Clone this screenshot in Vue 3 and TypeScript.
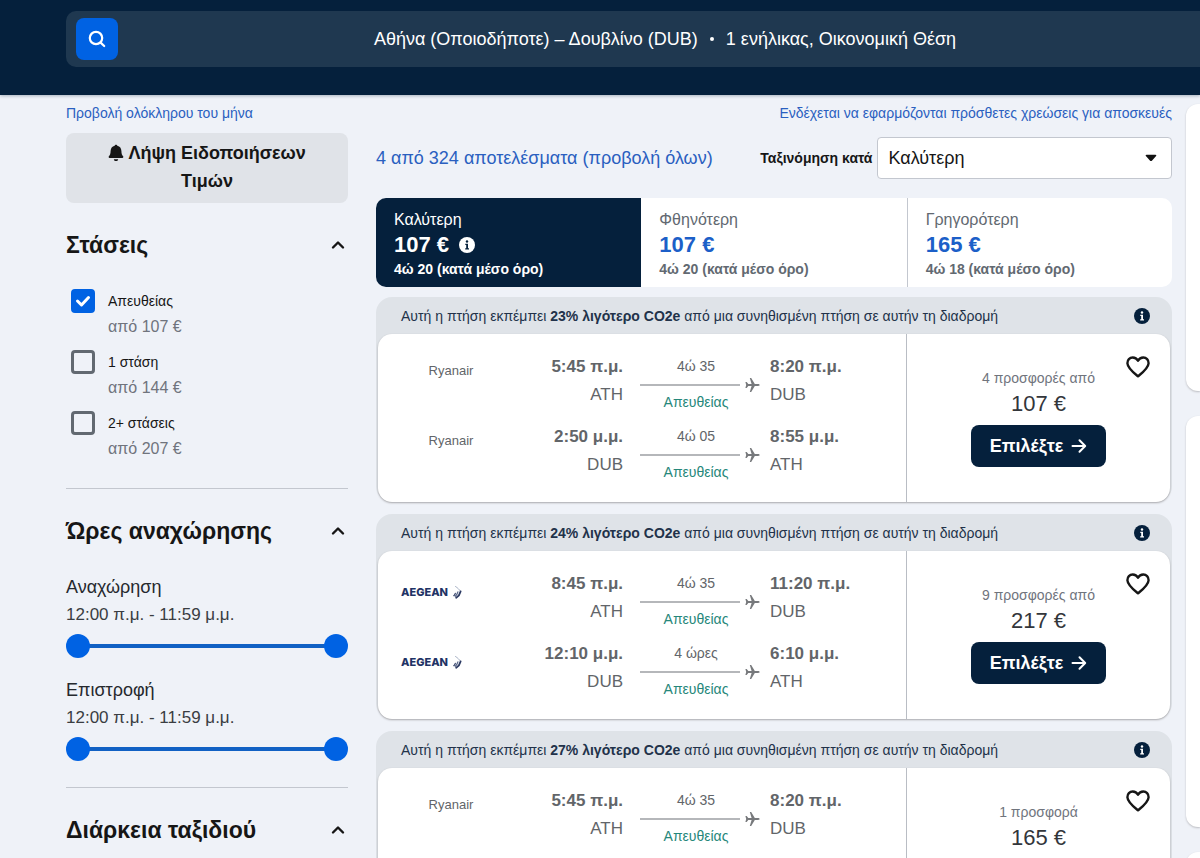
<script setup lang="ts">
import { reactive, ref } from 'vue'

interface Leg {
  airline: 'Ryanair' | 'Aegean'
  depart: string
  from: string
  duration: string
  arrive: string
  to: string
}
interface Flight {
  saving: string
  offers: string
  price: string
  legs: Leg[]
}

const stops = reactive([
  { id: 'direct', label: 'Απευθείας', price: 'από 107 €', checked: true },
  { id: 'one', label: '1 στάση', price: 'από 144 €', checked: false },
  { id: 'two', label: '2+ στάσεις', price: 'από 207 €', checked: false },
])

const times = reactive([
  { label: 'Αναχώρηση', low: 0, high: 1439 },
  { label: 'Επιστροφή', low: 0, high: 1439 },
])

function clock(minutes: number): string {
  const hours = Math.floor(minutes / 60)
  const rest = String(minutes % 60).padStart(2, '0')
  return `${hours % 12 || 12}:${rest} ${hours < 12 ? 'π.μ.' : 'μ.μ.'}`
}

const sort = ref('Καλύτερη')
const tabs = [
  { name: 'Καλύτερη', price: '107 €', time: '4ώ 20 (κατά μέσο όρο)' },
  { name: 'Φθηνότερη', price: '107 €', time: '4ώ 20 (κατά μέσο όρο)' },
  { name: 'Γρηγορότερη', price: '165 €', time: '4ώ 18 (κατά μέσο όρο)' },
]

const flights: Flight[] = [
  {
    saving: '23%',
    offers: '4 προσφορές από',
    price: '107 €',
    legs: [
      { airline: 'Ryanair', depart: '5:45 π.μ.', from: 'ATH', duration: '4ώ 35', arrive: '8:20 π.μ.', to: 'DUB' },
      { airline: 'Ryanair', depart: '2:50 μ.μ.', from: 'DUB', duration: '4ώ 05', arrive: '8:55 μ.μ.', to: 'ATH' },
    ],
  },
  {
    saving: '24%',
    offers: '9 προσφορές από',
    price: '217 €',
    legs: [
      { airline: 'Aegean', depart: '8:45 π.μ.', from: 'ATH', duration: '4ώ 35', arrive: '11:20 π.μ.', to: 'DUB' },
      { airline: 'Aegean', depart: '12:10 μ.μ.', from: 'DUB', duration: '4 ώρες', arrive: '6:10 μ.μ.', to: 'ATH' },
    ],
  },
  {
    saving: '27%',
    offers: '1 προσφορά',
    price: '165 €',
    legs: [
      { airline: 'Ryanair', depart: '5:45 π.μ.', from: 'ATH', duration: '4ώ 35', arrive: '8:20 π.μ.', to: 'DUB' },
    ],
  },
]
</script>

<template>
  <div class="page">
    <header class="top">
      <div class="search">
        <button class="search-btn" type="button" aria-label="Αναζήτηση">
          <svg viewBox="0 0 20 20" width="20" height="20" fill="none" stroke="#fff" stroke-width="2.200" stroke-linecap="round">
            <circle cx="9" cy="9" r="6.2" /><path d="M13.600 13.600l3.600 3.400" />
          </svg>
        </button>
        <p class="summary">
          <span>Αθήνα (Οποιοδήποτε) – Δουβλίνο (DUB)</span>
          <i class="dot"></i>
          <span>1 ενήλικας, Οικονομική Θέση</span>
        </p>
      </div>
    </header>

    <div class="body">
      <aside class="side">
        <a class="small-link" href="#month">Προβολή ολόκληρου του μήνα</a>
        <button class="alerts" type="button">
          <svg class="bell" viewBox="0 0 16 18" width="16" height="18" fill="#161616">
            <path d="M8 .8c.7 0 1.200.4 1.300 1 2.700.6 4 2.600 4.100 5.200.1 2.700.5 4 1.700 5.300.6.700.2 1.700-.7 1.700H1.600c-.9 0-1.300-1-.7-1.700C2.100 11 2.500 9.700 2.600 7c.1-2.600 1.400-4.600 4.100-5.200.1-.6.600-1 1.300-1zM5.800 15.200h4.400c-.2 1.200-1 1.900-2.200 1.900s-2-.7-2.200-1.900z" />
          </svg>
          Λήψη Ειδοποιήσεων Τιμών
        </button>

        <section class="filter">
          <h2><button type="button" class="fold">Στάσεις
            <svg viewBox="0 0 14 10" width="14" height="10"><path d="M2 7.500l5-5 5 5" /></svg></button></h2>
          <div class="stops">
            <label v-for="s in stops" :key="s.id" class="stop">
              <input v-model="s.checked" type="checkbox">
              <span class="stop-name">{{ s.label }}</span>
              <span class="stop-price">{{ s.price }}</span>
            </label>
          </div>
        </section>

        <section class="filter">
          <h2><button type="button" class="fold">Ώρες αναχώρησης
            <svg viewBox="0 0 14 10" width="14" height="10"><path d="M2 7.500l5-5 5 5" /></svg></button></h2>
          <div class="times">
            <div v-for="t in times" :key="t.label">
              <p class="time-text">{{ t.label }}</p>
              <p class="time-text range-text">{{ clock(t.low) }} - {{ clock(t.high) }}</p>
              <div class="slider">
                <span class="track"></span>
                <input v-model.number="t.low" type="range" min="0" max="1439" :aria-label="t.label + ' από'">
                <input v-model.number="t.high" type="range" min="0" max="1439" :aria-label="t.label + ' έως'">
              </div>
            </div>
          </div>
        </section>

        <section class="filter last">
          <h2><button type="button" class="fold">Διάρκεια ταξιδιού
            <svg viewBox="0 0 14 10" width="14" height="10"><path d="M2 7.500l5-5 5 5" /></svg></button></h2>
        </section>
      </aside>

      <main class="results">
        <a class="small-link fees" href="#fees">Ενδέχεται να εφαρμόζονται πρόσθετες χρεώσεις για αποσκευές</a>
        <div class="sort-row">
          <a class="count" href="#all">4 από 324 αποτελέσματα (προβολή όλων)</a>
          <label class="sort-label" for="sort">Ταξινόμηση κατά</label>
          <div class="select">
            <select id="sort" v-model="sort">
              <option v-for="t in tabs" :key="t.name">{{ t.name }}</option>
            </select>
            <svg viewBox="0 0 12 8" width="12" height="8" fill="#111"><path d="M1.500.8h9c.8 0 1.100.8.6 1.300L6.900 6.700c-.5.5-1.300.5-1.800 0L.9 2.100C.4 1.600.7.8 1.500.8z" /></svg>
          </div>
        </div>

        <div class="tabs">
          <button v-for="(t, i) in tabs" :key="t.name" type="button" class="tab" :class="{ active: i === 0 }">
            <span class="tab-name">{{ t.name }}</span>
            <span class="tab-price">{{ t.price }}
              <svg v-if="i === 0" viewBox="0 0 16 16" width="16" height="16">
                <circle cx="8" cy="8" r="8" fill="#fff" /><circle cx="8" cy="4.500" r="1.200" fill="#05203c" /><path d="M6.300 6.800H9v4.400h1v1.300H6.200v-1.300h1V8h-.9z" fill="#05203c" />
              </svg>
            </span>
            <span class="tab-time">{{ t.time }}</span>
          </button>
        </div>

        <article v-for="(f, i) in flights" :key="i" class="card">
          <div class="eco">
            <p>Αυτή η πτήση εκπέμπει <b>{{ f.saving }} λιγότερο CO2e</b> από μια συνηθισμένη πτήση σε αυτήν τη διαδρομή</p>
            <svg viewBox="0 0 16 16" width="16" height="16">
              <circle cx="8" cy="8" r="8" fill="#05203c" /><circle cx="8" cy="4.500" r="1.200" fill="#fff" /><path d="M6.300 6.800H9v4.400h1v1.300H6.200v-1.300h1V8h-.9z" fill="#fff" />
            </svg>
          </div>
          <div class="ticket">
            <div class="legs">
              <div v-for="(l, j) in f.legs" :key="j" class="leg">
                <div v-if="l.airline === 'Ryanair'" class="airline">Ryanair</div>
                <div v-else class="airline logo">
                  <span>AEGEAN</span>
                  <svg viewBox="0 0 10 14" width="10" height="14" fill="none" stroke-linecap="round">
                    <path d="M3.500 1.500c2.200 1.400 4 3 5 5" stroke="#a9b3c6" stroke-width="1" />
                    <path d="M8.600 6.500c-.6 2.500-2 4.800-4.400 6.300" stroke="#2c3a63" stroke-width="1.800" />
                    <path d="M5.900 6.800c-.5 1.800-1.300 3.200-2.600 4.400" stroke="#5d6a8b" stroke-width="1.300" />
                    <path d="M3.300 8.300c-.3 1-.8 1.800-1.500 2.400" stroke="#2c3a63" stroke-width="1.200" />
                  </svg>
                </div>
                <div class="end depart"><b>{{ l.depart }}</b><span>{{ l.from }}</span></div>
                <div class="route">
                  <span class="duration">{{ l.duration }}</span>
                  <div class="line">
                    <i></i>
                    <svg viewBox="0 0 16 16" width="16" height="16">
                      <path d="M15.600 8c0 .6-.7.9-1.500.9h-3.300l-3.600 6H5.800l1.800-6H4.300L2.700 11H1.400l.8-3-.8-3h1.300l1.600 2.100h3.300l-1.800-6h1.400l3.600 6h3.300c.8 0 1.500.3 1.500.9z" />
                    </svg>
                  </div>
                  <span class="direct">Απευθείας</span>
                </div>
                <div class="end"><b>{{ l.arrive }}</b><span>{{ l.to }}</span></div>
              </div>
            </div>
            <div class="deal">
              <div class="offer">
                <span class="offers">{{ f.offers }}</span>
                <span class="price">{{ f.price }}</span>
                <button v-if="f.legs.length > 1" type="button" class="choose">Επιλέξτε
                  <svg viewBox="0 0 16 16" width="16" height="16" fill="none" stroke="#fff" stroke-width="2" stroke-linecap="round" stroke-linejoin="round"><path d="M1.500 8h12.500M8.500 2.300L14.200 8l-5.700 5.700" /></svg>
                </button>
              </div>
              <button type="button" class="save" aria-label="Αποθήκευση">
                <svg viewBox="0 0 24 24" width="24" height="24" fill="none" stroke="#161616" stroke-width="2.400" stroke-linejoin="round">
                  <path d="M12 21.300C8 18 1.600 13.200 1.400 8.200 1.300 4.900 3.700 2.500 6.700 2.500c2.200 0 4.100 1 5.300 3.200 1.200-2.200 3.100-3.200 5.300-3.200 3 0 5.400 2.400 5.300 5.700-.2 5-6.600 9.800-10.600 13.100z" />
                </svg>
              </button>
            </div>
          </div>
        </article>
      </main>

      <div class="rail">
        <div class="panel"></div>
        <div class="panel tall"></div>
        <div class="panel"></div>
      </div>
    </div>
  </div>
</template>

<style>
html {
  scrollbar-width: none;
}
body {
  margin: 0;
  background: #eff2f8;
}
</style>

<style scoped>
.page {
  display: flex;
  flex-direction: column;
  height: 100vh;
  overflow: hidden;
  font-family: 'Liberation Sans', Arial, sans-serif;
  font-size: 14px;
  line-height: 20px;
  color: #161616;
  background: #eff2f8;
}
.page * {
  box-sizing: border-box;
}
p,
h2 {
  margin: 0;
}
button,
select {
  font: inherit;
  color: inherit;
  border: 0;
  padding: 0;
  background: none;
  cursor: pointer;
}
svg {
  flex: none;
}
.top {
  flex: none;
  background: #05203c;
  padding: 11px 0 28px 66px;
  box-shadow: 0 1px 3px rgba(5, 32, 60, 0.3);
}
.search {
  display: flex;
  align-items: center;
  height: 56px;
  padding-left: 10px;
  border-radius: 10px 0 0 10px;
  background: #1f3850;
}
.search-btn {
  display: grid;
  place-items: center;
  width: 42px;
  height: 42px;
  border-radius: 8px;
  background: #0062e3;
}
.summary {
  flex: 1;
  display: flex;
  justify-content: center;
  align-items: center;
  gap: 12px;
  padding-left: 12px;
  font-size: 18px;
  line-height: 24px;
  color: #fff;
}
.dot {
  width: 4px;
  height: 4px;
  border-radius: 50%;
  background: #fff;
}
.body {
  flex: 1;
  min-height: 0;
  display: grid;
  grid-template-columns: 282px minmax(0, 1fr) 14px;
  align-items: start;
  padding-left: 66px;
}
.small-link,
.count {
  color: #2a5fc0;
  text-decoration: none;
}
.side {
  padding-top: 8px;
}
.small-link {
  display: block;
}
.alerts {
  display: block;
  width: 100%;
  margin-top: 10px;
  padding: 6px 32px 8px;
  border-radius: 8px;
  background: #e0e3e8;
  font-size: 18px;
  line-height: 28px;
  font-weight: 700;
}
.bell {
  vertical-align: -3px;
}
.filter {
  padding: 26px 0;
}
.filter + .filter {
  border-top: 1px solid #c3c7cf;
}
.filter.last {
  padding-bottom: 0;
}
.fold {
  display: flex;
  justify-content: space-between;
  align-items: center;
  width: 100%;
  padding-right: 3px;
  font-size: 23px;
  line-height: 32px;
  font-weight: 700;
}
.fold svg {
  fill: none;
  stroke: #161616;
  stroke-width: 2.400;
  stroke-linecap: round;
  stroke-linejoin: round;
}
.stops {
  display: grid;
  gap: 9px;
  padding: 27px 0 0 5px;
}
.stop {
  display: grid;
  grid-template-columns: 24px 1fr;
  column-gap: 13px;
  line-height: 26px;
}
.stop input {
  appearance: none;
  width: 24px;
  height: 24px;
  margin: 1px 0;
  border: 3px solid #626971;
  border-radius: 4px;
}
.stop input:checked {
  border-color: #0062e3;
  background: #0062e3 url("data:image/svg+xml,%3Csvg xmlns='http://www.w3.org/2000/svg' viewBox='0 0 18 18'%3E%3Cpath d='M3.500 9l4 4 7-7.500' fill='none' stroke='white' stroke-width='3' stroke-linecap='round' stroke-linejoin='round'/%3E%3C/svg%3E") center / 18px no-repeat;
}
.stop-price {
  grid-column: 2;
  font-size: 16px;
  color: #70747d;
}
.times {
  display: grid;
  gap: 18px;
  padding-top: 26px;
}
.time-text {
  font-size: 18px;
  line-height: 28px;
  color: #26292e;
}
.range-text {
  font-size: 17px;
  color: #3a3d42;
}
.slider {
  display: grid;
  align-items: center;
  margin-top: 5px;
}
.slider > * {
  grid-area: 1 / 1;
}
.track {
  height: 4px;
  margin: 0 10px;
  background: #1161c4;
}
.slider input {
  appearance: none;
  width: 100%;
  height: 24px;
  margin: 0;
  background: none;
  pointer-events: none;
}
.slider input::-webkit-slider-thumb {
  appearance: none;
  width: 24px;
  height: 24px;
  border-radius: 50%;
  background: #0062e3;
  pointer-events: auto;
}
.results {
  padding: 8px 14px 0 28px;
}
.fees {
  text-align: right;
}
.sort-row {
  display: flex;
  align-items: center;
  margin-top: 14px;
}
.count {
  flex: 1;
  font-size: 18px;
  line-height: 24px;
}
.sort-label {
  font-weight: 700;
  margin-right: 5px;
}
.select {
  display: grid;
  align-items: center;
  width: 37%;
}
.select > * {
  grid-area: 1 / 1;
}
.select select {
  appearance: none;
  width: 100%;
  height: 42px;
  padding: 0 36px 0 10px;
  border: 1px solid #c3c7cf;
  border-radius: 4px;
  background: #fff;
  font-size: 18px;
}
.select svg {
  justify-self: end;
  margin-right: 15px;
  pointer-events: none;
}
.tabs {
  display: grid;
  grid-template-columns: repeat(3, 1fr);
  margin-top: 19px;
  border-radius: 10px;
  overflow: hidden;
  background: #fff;
}
.tab {
  display: flex;
  flex-direction: column;
  padding: 11px 18px 8px;
  text-align: left;
  color: #626971;
}
.tab + .tab {
  border-left: 1px solid #c3c7cf;
}
.tab.active + .tab {
  border-left: 0;
}
.tab.active {
  background: #05203c;
  color: #fff;
}
.tab-name {
  font-size: 16px;
  line-height: 22px;
}
.tab-price {
  display: flex;
  align-items: center;
  gap: 10px;
  font-size: 22px;
  line-height: 28px;
  font-weight: 700;
  color: #1c5fc8;
}
.active .tab-price {
  color: #fff;
}
.tab-time {
  font-weight: 700;
}
.card {
  margin-top: 10px;
  padding: 0 2px;
  border-radius: 16px;
  background: #dfe3e8;
}
.card + .card {
  margin-top: 12px;
}
.eco {
  display: flex;
  align-items: center;
  justify-content: space-between;
  height: 37px;
  padding: 0 20px 0 23px;
  color: #22324a;
}
.ticket {
  display: grid;
  grid-template-columns: 2fr 1fr;
  min-height: 168px;
  border-radius: 14px;
  background: #fff;
  box-shadow: 0 1px 2px rgba(37, 32, 31, 0.35);
}
.legs {
  display: grid;
  align-content: start;
  gap: 11px;
  padding: 19px 0 20px 23px;
}
.leg {
  display: grid;
  grid-template-columns: 100px 20fr 120px 21fr;
  color: #626569;
}
.airline {
  display: flex;
  align-items: center;
  justify-content: center;
  height: 36px;
  font-size: 13px;
}
.logo {
  justify-content: flex-start;
  gap: 4px;
  height: 44px;
  font-family: Inter, sans-serif;
  font-size: 11px;
  font-weight: 800;
  color: #1f3365;
}
.end {
  display: flex;
  flex-direction: column;
  padding-left: 10px;
  font-size: 17px;
  line-height: 28px;
}
.depart {
  padding: 0 17px 0 0;
  text-align: right;
}
.route {
  display: flex;
  flex-direction: column;
  padding-top: 3px;
}
.duration,
.direct {
  padding-right: 8px;
  text-align: center;
}
.duration {
  line-height: 21px;
}
.direct {
  color: #26877a;
}
.line {
  display: flex;
  align-items: center;
  gap: 4px;
  height: 15px;
}
.line i {
  flex: 1;
  height: 2px;
  background: #b5b7ba;
}
.line svg {
  fill: #77797c;
}
.deal {
  display: grid;
  border-left: 1px solid #b9bdc4;
}
.deal > * {
  grid-area: 1 / 1;
}
.offer {
  display: flex;
  flex-direction: column;
  align-items: center;
  padding-top: 34px;
}
.offers {
  color: #70747d;
}
.price {
  margin: 2px 0 7px;
  font-size: 22px;
  line-height: 28px;
  color: #33363b;
}
.choose {
  display: flex;
  align-items: center;
  gap: 8px;
  height: 42px;
  padding: 0 19px;
  border-radius: 8px;
  background: #05203c;
  color: #fff;
  font-size: 18px;
  font-weight: 700;
}
.save {
  display: flex;
  justify-self: end;
  align-self: start;
  margin: 21px 20px 0 0;
}
.rail {
  display: grid;
  align-content: start;
  gap: 25px;
  padding-top: 9px;
}
.panel {
  height: 287px;
  border-radius: 12px 0 0 12px;
  background: #fff;
  box-shadow: 0 1px 2px rgba(37, 32, 31, 0.25);
}
.tall {
  height: 411px;
}
</style>
